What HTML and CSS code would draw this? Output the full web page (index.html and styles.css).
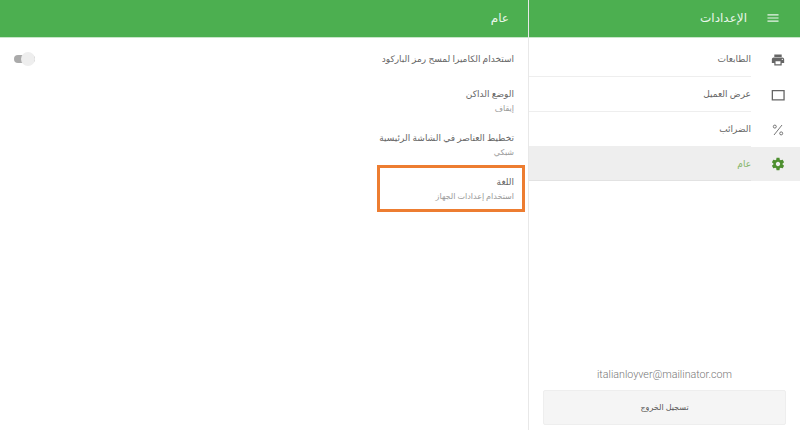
FILE: index.html
```html
<!DOCTYPE html>
<html lang="ar" dir="rtl">
<head>
<meta charset="utf-8">
<title>الإعدادات</title>
<link rel="stylesheet" href="styles.css">
</head>
<body>
<div class="app">
  <aside class="side">
    <header class="bar side-bar">
      <svg class="menu" viewBox="-1 -1 26 26" width="16" height="16"><path d="M3 18h18v-2H3v2zm0-5h18v-2H3v2zm0-7v2h18V6H3z"/></svg>
      <span class="bar-title">الإعدادات</span>
    </header>
    <nav class="nav">
      <div class="nav-item">
        <svg class="ico" viewBox="-1 -1 26 26" width="16" height="16"><path d="M19 8H5c-1.66 0-3 1.34-3 3v6h4v4h12v-4h4v-6c0-1.66-1.34-3-3-3zm-3 11H8v-5h8v5zm3-7c-.55 0-1-.45-1-1s.45-1 1-1 1 .45 1 1-.45 1-1 1zm-1-9H6v4h12V3z"/></svg>
        <span class="nav-label">الطابعات</span>
      </div>
      <div class="nav-item">
        <svg class="ico" viewBox="0 0 16 16" width="16" height="16"><path d="M1.7 3h13v10.5h-13zM3 4.3v7.9h10.4V4.3z" fill-rule="evenodd"/></svg>
        <span class="nav-label">عرض العميل</span>
      </div>
      <div class="nav-item">
        <svg class="ico thin" viewBox="0 0 16 16" width="16" height="16"><path d="M12 3l-8 10" /><circle cx="4.8" cy="4.6" r="1.5"/><circle cx="11.2" cy="11.4" r="1.5"/></svg>
        <span class="nav-label">الضرائب</span>
      </div>
      <div class="nav-item active">
        <svg class="ico" viewBox="-1 -1 26 26" width="16" height="16"><path d="M19.43 12.98c.04-.32.07-.64.07-.98s-.03-.66-.07-.98l2.11-1.65c.19-.15.24-.42.12-.64l-2-3.46c-.12-.22-.39-.3-.61-.22l-2.49 1c-.52-.4-1.08-.73-1.69-.98l-.38-2.65C14.46 2.18 14.25 2 14 2h-4c-.25 0-.46.18-.49.42l-.38 2.65c-.61.25-1.17.59-1.69.98l-2.49-1c-.23-.09-.49 0-.61.22l-2 3.46c-.13.22-.07.49.12.64l2.11 1.65c-.04.32-.07.65-.07.98s.03.66.07.98l-2.11 1.65c-.19.15-.24.42-.12.64l2 3.46c.12.22.39.3.61.22l2.49-1c.52.4 1.08.73 1.69.98l.38 2.65c.03.24.24.42.49.42h4c.25 0 .46-.18.49-.42l.38-2.65c.61-.25 1.17-.59 1.69-.98l2.49 1c.23.09.49 0 .61-.22l2-3.46c.12-.22.07-.49-.12-.64l-2.11-1.65zM12 15.5c-1.93 0-3.5-1.57-3.5-3.5s1.57-3.5 3.5-3.5 3.5 1.57 3.5 3.5-1.57 3.5-3.5 3.5z"/></svg>
        <span class="nav-label">عام</span>
      </div>
    </nav>
    <div class="account">
      <div class="email" dir="ltr">italianloyver@mailinator.com</div>
      <button class="logout">تسجيل الخروج</button>
    </div>
  </aside>
  <main class="main">
    <header class="bar main-bar"><span class="bar-title">عام</span></header>
    <section class="settings">
      <div class="row row-switch">
        <div class="row-title">استخدام الكاميرا لمسح رمز الباركود</div>
        <div class="switch"><span class="knob"></span></div>
      </div>
      <div class="row">
        <div class="row-title">الوضع الداكن</div>
        <div class="row-sub">إيقاف</div>
      </div>
      <div class="row">
        <div class="row-title">تخطيط العناصر في الشاشة الرئيسية</div>
        <div class="row-sub">شبكي</div>
      </div>
      <div class="row row-marked">
        <div class="row-title">اللغة</div>
        <div class="row-sub">استخدام إعدادات الجهاز</div>
        <div class="mark"></div>
      </div>
    </section>
  </main>
</div>
</body>
</html>
```
FILE: styles.css
```css
* { box-sizing: border-box; }
html, body { margin: 0; height: 100%; }
body {
  background: #fff;
  color: #666;
  font-family: Roboto, "Noto Sans", "DejaVu Sans", sans-serif;
  font-size: 9px;
  overflow: hidden;
}
.app { display: flex; height: 430px; }
.side { width: 271px; display: flex; flex-direction: column; }
.main { flex: 1; display: flex; flex-direction: column; border-right: 1px solid #e8e8e8; }
.bar {
  height: 38px;
  background: #4caf50;
  border-bottom: 1px solid #c8e6c9;
  color: #eaf6ea;
  display: flex;
  align-items: center;
  font-size: 12px;
  flex: none;
}
.side-bar { padding-right: 19px; gap: 18px; }
.main-bar { padding-right: 19px; }
.menu { fill: #e8f5e9; flex: none; margin-top: -1px; }
.bar-title { margin-top: -1px; }
.nav { padding-top: 4px; flex: 1; }
.nav-item {
  height: 35px;
  display: flex;
  align-items: stretch;
  gap: 19px;
  padding-right: 14px;
}
.nav-item .ico { align-self: center; }
.nav-label {
  flex: 1;
  display: flex;
  align-items: center;
  border-bottom: 1px solid #eee;
}
.ico { fill: #666; flex: none; }
.ico.thin { fill: none; stroke: #666; stroke-width: 0.9; }
.nav-item.active { height: 34px; background: #eee; color: #84b566; }
.nav-item.active .nav-label { border-bottom-color: #e2e2e2; }
.nav-item.active .ico { fill: #4d8f2f; }
.account { padding: 0 14px 5px 14px; display: flex; flex-direction: column; }
.email { text-align: center; font-size: 10.7px; font-weight: 300; color: #777; margin-bottom: 9px; }
.logout {
  height: 35px;
  background: #f5f5f5;
  border: 1px solid #eee;
  border-radius: 2px;
  font: inherit;
  font-size: 8px;
  color: #555;
}
.settings { padding: 0 14px 0 0; }
.row { height: 44px; padding-top: 2px; position: relative; }
.row-switch { display: flex; justify-content: space-between; align-items: center; height: 42px; padding: 0 0 0 14px; margin-bottom: 5px; }
.row-title { color: #666; font-size: 9px; line-height: 15px; }
.row-sub { color: #999; font-size: 8px; line-height: 13px; }
.switch { width: 21px; height: 8px; background: #aaa; border-radius: 4px; position: relative; }
.knob { position: absolute; left: 7px; top: -3px; width: 14px; height: 14px; border-radius: 50%; background: #eee; }
.mark { position: absolute; top: -8px; right: -11px; width: 148px; height: 47px; border: 3px solid #ed7d31; }
```
